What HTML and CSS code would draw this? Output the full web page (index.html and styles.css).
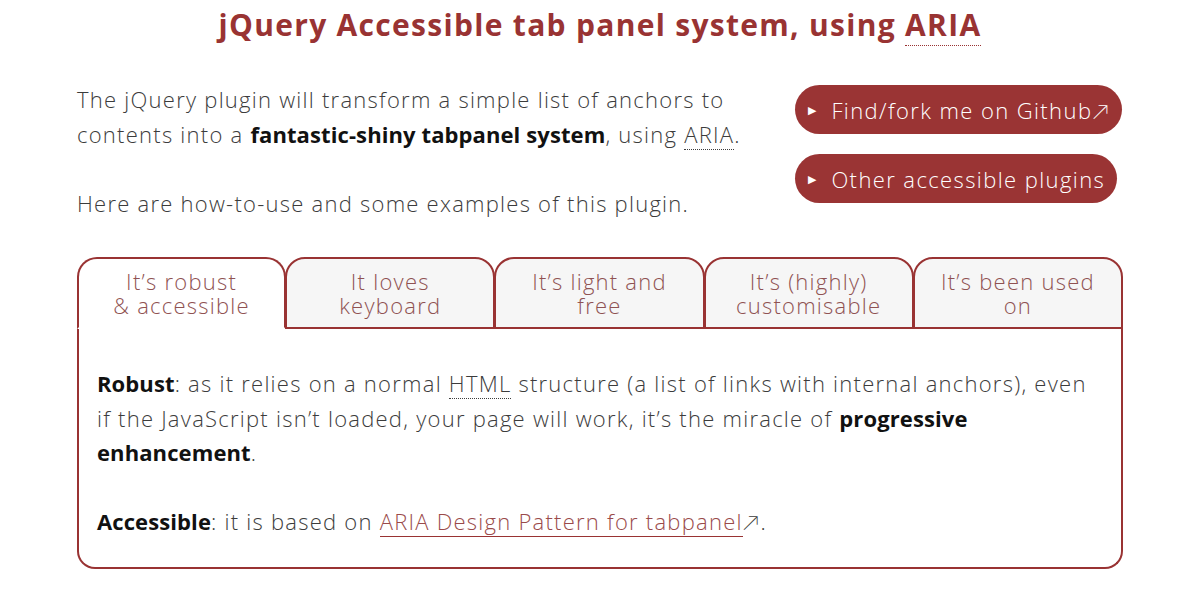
FILE: index.html
```html
<!DOCTYPE html>
<html lang="en">
<head>
<meta charset="utf-8">
<title>jQuery Accessible tab panel system, using ARIA</title>
<link rel="stylesheet" href="styles.css">
</head>
<body>
<div class="page">
  <h1 class="title">jQuery Accessible tab panel system, using <abbr class="abbr" title="Accessible Rich Internet Applications">ARIA</abbr></h1>

  <div class="intro">
    <div class="intro-text">
      <p class="para">The jQuery plugin will transform a simple list of anchors to contents into a <strong class="strong">fantastic-shiny tabpanel system</strong>, using <abbr class="abbr" title="Accessible Rich Internet Applications">ARIA</abbr>.</p>
      <p class="para">Here are how-to-use and some examples of this plugin.</p>
    </div>
    <div class="intro-actions">
      <a class="btn" href="#"><span class="btn-arrow">&#9654;</span>Find/fork me on Github&#8599;</a>
      <a class="btn" href="#"><span class="btn-arrow">&#9654;</span>Other accessible plugins</a>
    </div>
  </div>

  <div class="tabs">
    <ul class="tablist" role="tablist">
      <li class="tab is-active" role="tab">It’s robust<br>&amp; accessible</li>
      <li class="tab" role="tab">It loves<br>keyboard</li>
      <li class="tab" role="tab">It’s light and<br>free</li>
      <li class="tab" role="tab">It’s (highly)<br>customisable</li>
      <li class="tab" role="tab">It’s been used<br>on</li>
    </ul>
    <div class="panel" role="tabpanel">
      <p class="panel-para"><strong class="strong">Robust</strong>: as it relies on a normal <abbr class="abbr" title="HyperText Markup Language">HTML</abbr> structure (a list of links with internal anchors), even if the JavaScript isn’t loaded, your page will work, it’s the miracle of <strong class="strong">progressive enhancement</strong>.</p>
      <p class="panel-para"><strong class="strong">Accessible</strong>: it is based on <a class="link" href="#">ARIA Design Pattern for tabpanel</a>&#8599;.</p>
    </div>
  </div>
</div>
</body>
</html>
```

FILE: styles.css
```css
html, body {
  margin: 0;
  padding: 0;
  background: #ffffff;
}

body {
  font-family: "Open Sans", "Lato", sans-serif;
  font-weight: 300;
  font-size: 22px;
  color: #3c3c3c;
  letter-spacing: 1.25px;
}

.page {
  width: 1046px;
  margin: 0 auto;
}

.title {
  margin: 0;
  padding-top: 5px;
  font-size: 30px;
  line-height: 40px;
  font-weight: 700;
  color: #993333;
  text-align: center;
  letter-spacing: 1.3px;
}

.abbr {
  text-decoration: none;
  border-bottom: 1px dotted currentColor;
}

.intro {
  display: flex;
  justify-content: space-between;
  margin-top: 37px;
}

.intro-text {
  width: 690px;
}

.para {
  margin: 0 0 34px;
  line-height: 35px;
}

.strong {
  font-weight: 700;
  color: #111;
  letter-spacing: 0.1px;
}

.intro-actions {
  width: 328px;
  display: flex;
  flex-direction: column;
  align-items: flex-start;
  gap: 20px;
  padding-top: 3px;
}

.btn {
  display: inline-flex;
  align-items: center;
  background: #9a3434;
  color: #ffffff;
  text-decoration: none;
  border-radius: 25px;
  height: 49px;
  padding: 0 12px 0 13px;
  font-size: 22px;
  font-weight: 300;
  letter-spacing: 1.4px;
  white-space: nowrap;
}

.btn-arrow {
  font-size: 11px;
  margin-right: 14px;
}

.tabs {
  margin-top: 2px;
}

.tablist {
  list-style: none;
  margin: 0;
  padding: 0;
  display: grid;
  grid-template-columns: repeat(5, 1fr);
}

.tab {
  border: 2px solid #993333;
  border-radius: 20px 20px 0 0;
  background: #f6f6f6;
  color: #8f5252;
  text-align: center;
  line-height: 24px;
  padding: 10px 4px;
  font-size: 22px;
}

.tab + .tab {
  margin-left: -1px;
}

.tab.is-active {
  background: #ffffff;
  border-bottom-color: #ffffff;
}

.panel {
  border: 2px solid #993333;
  border-top: 0;
  border-radius: 0 0 18px 18px;
  padding: 37px 18px 29px;
}

.panel-para {
  margin: 0 0 34px;
  line-height: 34.5px;
}

.panel-para:last-child {
  margin-bottom: 0;
}

.link {
  color: #9a4a4a;
  text-decoration: none;
  border-bottom: 1px solid #993333;
}
```
